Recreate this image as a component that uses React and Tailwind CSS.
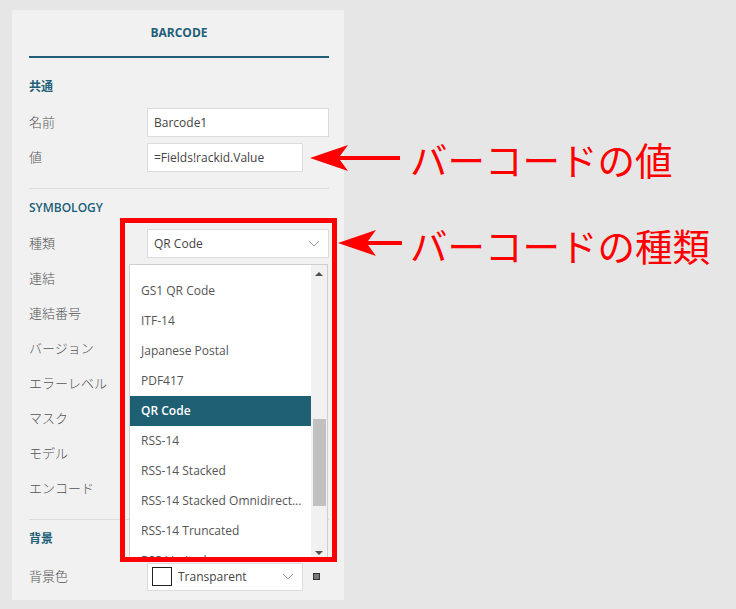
import React from 'react';

const teal = 'text-[#215f78]';

function Chevron() {
  return (
    <svg width="12" height="7" viewBox="0 0 12 7" className="shrink-0">
      <path d="M1 1 L6 6 L11 1" fill="none" stroke="#9a9a9a" strokeWidth="1" />
    </svg>
  );
}

function Row({ label, children }) {
  return (
    <div className="flex h-[35px] items-center">
      <div className="w-[118px] text-[13px] font-light text-[#555]">{label}</div>
      {children}
    </div>
  );
}

function Section({ title }) {
  return (
    <div className={`flex h-[30px] items-center text-[12px] font-semibold ${teal}`}>{title}</div>
  );
}

function Arrow({ width }) {
  return (
    <svg width={width} height="30" viewBox={`0 0 ${width} 30`}>
      <polygon points={`0,15 38,2 30,13 ${width},13 ${width},17 30,17 38,28`} fill="#ff0000" />
    </svg>
  );
}

const items = [
  'GS1 QR Code',
  'ITF-14',
  'Japanese Postal',
  'PDF417',
  'QR Code',
  'RSS-14',
  'RSS-14 Stacked',
  'RSS-14 Stacked Omnidirect...',
  'RSS-14 Truncated',
  'RSS Limited',
];

export default function App() {
  return (
    <div
      className="relative h-[609px] w-[736px] overflow-hidden bg-[#e6e6e6] pl-[12px] pt-[10px]"
      style={{ fontFamily: '"Open Sans", "Noto Sans CJK JP", sans-serif' }}
    >
      <div className="h-[590px] w-[332px] bg-[#f1f1f1] pl-[17px] pr-[15px]">
        <div className={`flex h-[46px] items-center justify-center text-[12px] font-bold ${teal}`}>
          BARCODE
        </div>
        <div className="h-[2px] bg-[#215f78]" />

        <div className="mt-[14px]">
          <Section title="共通" />
        </div>
        <div className="mt-[3px]">
          <Row label="名前">
            <div className="flex h-[29px] w-[182px] items-center border border-[#dcdcdc] bg-white pl-[6px] text-[12px] text-[#444]">
              Barcode1
            </div>
          </Row>
          <Row label="値">
            <div className="flex h-[29px] w-[156px] items-center border border-[#dcdcdc] bg-white pl-[6px] text-[12px] text-[#444]">
              =Fields!rackid.Value
            </div>
          </Row>
        </div>
        <div className="mt-[13px] h-px bg-[#dcdcdc]" />

        <div className="mt-[4px]">
          <Section title="SYMBOLOGY" />
        </div>
        <div className="mt-[3px]">
          <Row label="種類">
            <div className="flex h-[29px] w-[182px] items-center justify-between border border-[#dcdcdc] bg-white pl-[6px] pr-[8px] text-[12px] text-[#444]">
              <span>QR Code</span>
              <Chevron />
            </div>
          </Row>
          {['連結', '連結番号', 'バージョン', 'エラーレベル', 'マスク', 'モデル', 'エンコード'].map(l => (
            <Row key={l} label={l} />
          ))}
        </div>
        <div className="mt-[13px] h-px bg-[#dcdcdc]" />

        <div className="mt-[4px]">
          <Section title="背景" />
        </div>
        <div className="mt-[5px]">
          <Row label="背景色">
            <div className="flex h-[28px] w-[156px] items-center border border-[#dcdcdc] bg-white pl-[4px] pr-[8px] text-[12px] text-[#444]">
              <div className="h-[19px] w-[20px] border border-[#222] bg-white" />
              <span className="ml-[6px] flex-1">Transparent</span>
              <Chevron />
            </div>
            <div className="ml-[10px] h-[7px] w-[7px] border border-[#333] bg-[#7a7a7a]" />
          </Row>
        </div>
      </div>

      {/* open dropdown list */}
      <div className="absolute left-[129px] top-[264px] flex h-[294px] w-[199px] border border-[#cfcfcf] bg-white">
        <div className="flex-1 overflow-hidden pt-[11px]">
          {items.map(it => (
            <div
              key={it}
              className={
                it === 'QR Code'
                  ? 'flex h-[30px] items-center bg-[#1f5f74] pl-[11px] text-[12px] font-semibold text-white'
                  : 'flex h-[30px] items-center whitespace-nowrap pl-[11px] text-[12px] text-[#555]'
              }
            >
              {it}
            </div>
          ))}
        </div>
        <div className="relative w-[16px] bg-[#f1f1f1]">
          <div className="absolute left-[4px] top-[7px] h-0 w-0 border-x-[4px] border-b-[4px] border-x-transparent border-b-[#505050]" />
          <div className="absolute left-[2px] top-[154px] h-[87px] w-[13px] bg-[#c1c1c1]" />
          <div className="absolute bottom-[2px] left-[4px] h-0 w-0 border-x-[4px] border-t-[4px] border-x-transparent border-t-[#505050]" />
        </div>
      </div>

      {/* annotations */}
      <div className="absolute left-[120px] top-[218px] h-[344px] w-[217px] border-[5px] border-[#ff0000]" />
      <div className="absolute left-[310px] top-[143px]">
        <Arrow width={90} />
      </div>
      <div className="absolute left-[338px] top-[228px]">
        <Arrow width={64} />
      </div>
      <div
        className="absolute left-[410px] top-[137px] text-[37.5px] leading-[44px] text-[#ff0000]"
        style={{ fontFamily: '"Noto Sans CJK JP", sans-serif' }}
      >
        バーコードの値
      </div>
      <div
        className="absolute left-[410px] top-[223px] text-[37.5px] leading-[44px] text-[#ff0000]"
        style={{ fontFamily: '"Noto Sans CJK JP", sans-serif' }}
      >
        バーコードの種類
      </div>
    </div>
  );
}
